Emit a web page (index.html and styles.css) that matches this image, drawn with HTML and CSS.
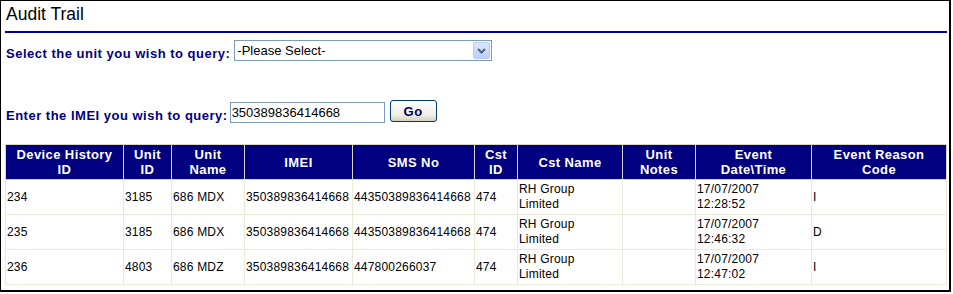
FILE: index.html
```html
<!DOCTYPE html>
<html lang="en">
<head>
  <meta charset="UTF-8" />
  <title>Audit Trail</title>
  <link rel="stylesheet" href="styles.css">
</head>
<body>
  <div class="frame">
    <h1 class="title">Audit Trail</h1>
    <div class="rule"></div>

    <form class="query-form">
      <div class="query-row unit-row">
        <label for="unit" class="query-label">Select the unit you wish to query:</label>
        <div class="select-box">
          <select id="unit" name="unit">
            <option value="">-Please Select-</option>
          </select>
          <span class="select-arrow">
            <svg width="9" height="6" viewBox="0 0 9 6"><path d="M1 1 L4.5 4.5 L8 1" fill="none" stroke="#4d6185" stroke-width="2"/></svg>
          </span>
        </div>
      </div>

      <div class="query-row imei-row">
        <label for="imei" class="query-label">Enter the IMEI you wish to query:</label>
        <input type="text" id="imei" name="imei" class="imei-input" value="350389836414668" />
        <button type="submit" class="go-button">Go</button>
      </div>
    </form>

    <table class="audit-table">
      <colgroup>
        <col style="width:118px">
        <col style="width:48px">
        <col style="width:73px">
        <col style="width:108px">
        <col style="width:122px">
        <col style="width:43px">
        <col style="width:105px">
        <col style="width:73px">
        <col style="width:116px">
        <col style="width:135px">
      </colgroup>
      <thead>
        <tr>
          <th>Device History<br>ID</th>
          <th>Unit<br>ID</th>
          <th>Unit<br>Name</th>
          <th>IMEI</th>
          <th>SMS No</th>
          <th>Cst<br>ID</th>
          <th>Cst Name</th>
          <th>Unit<br>Notes</th>
          <th>Event<br>Date\Time</th>
          <th>Event Reason<br>Code</th>
        </tr>
      </thead>
      <tbody>
        <tr>
          <td>234</td>
          <td>3185</td>
          <td>686 MDX</td>
          <td>350389836414668</td>
          <td>44350389836414668</td>
          <td>474</td>
          <td>RH Group<br>Limited</td>
          <td></td>
          <td>17/07/2007<br>12:28:52</td>
          <td>I</td>
        </tr>
        <tr>
          <td>235</td>
          <td>3185</td>
          <td>686 MDX</td>
          <td>350389836414668</td>
          <td>44350389836414668</td>
          <td>474</td>
          <td>RH Group<br>Limited</td>
          <td></td>
          <td>17/07/2007<br>12:46:32</td>
          <td>D</td>
        </tr>
        <tr>
          <td>236</td>
          <td>4803</td>
          <td>686 MDZ</td>
          <td>350389836414668</td>
          <td>447800266037</td>
          <td>474</td>
          <td>RH Group<br>Limited</td>
          <td></td>
          <td>17/07/2007<br>12:47:02</td>
          <td>I</td>
        </tr>
      </tbody>
    </table>
  </div>
</body>
</html>
```

FILE: styles.css
```css
body {
  margin: 0;
  font-family: "Liberation Sans", Arial, sans-serif;
  background-color: white;
}

/* Outer panel */
.frame {
  box-sizing: border-box;
  width: 951px;
  height: 292px;
  padding: 3px 2px 0 4px;
  border: 1px solid black;
  border-right-width: 2px;
  border-bottom-width: 2px;
}

.title {
  margin: 0 0 0 1px;
  font-size: 17.5px;
  font-weight: normal;
  line-height: 20px;
  color: black;
}

.rule {
  height: 2px;
  margin-top: 7px;
  background-color: #000099;
}

/* Query rows */
.query-row {
  display: flex;
  align-items: center;
}

.unit-row {
  margin-top: 7px;
  height: 21px;
}

.imei-row {
  margin-top: 40px;
  height: 22px;
}

.query-label {
  margin-left: 1px;
  font-size: 13px;
  font-weight: bold;
  letter-spacing: 0.5px;
  color: #000080;
  position: relative;
  top: 3px;
}

.select-box {
  display: flex;
  box-sizing: border-box;
  width: 258px;
  height: 21px;
  margin-left: 4px;
  border: 1px solid #7f9db9;
  background-color: white;
}

.select-box select {
  flex: 1;
  appearance: none;
  -webkit-appearance: none;
  border: none;
  outline: none;
  background: white;
  padding: 0 0 0 2px;
  font-family: "Liberation Sans", Arial, sans-serif;
  font-size: 13px;
  color: black;
}

.select-arrow {
  display: flex;
  align-items: center;
  justify-content: center;
  box-sizing: border-box;
  width: 17px;
  margin: 1px;
  border: 1px solid #b9c9ef;
  border-radius: 2px;
  background: linear-gradient(#dce6fd, #bccffa);
}

.imei-input {
  box-sizing: border-box;
  width: 155px;
  height: 21px;
  margin-left: 2px;
  padding: 0 1px;
  border: 1px solid #7f9db9;
  font-family: "Liberation Sans", Arial, sans-serif;
  font-size: 13px;
  color: black;
}

.go-button {
  box-sizing: border-box;
  width: 47px;
  height: 22px;
  margin-left: 5px;
  padding: 0;
  border: 1px solid #003c74;
  border-radius: 3px;
  background: linear-gradient(#ffffff, #f0efe8 70%, #d6d0c0);
  font-family: "Liberation Sans", Arial, sans-serif;
  font-size: 13px;
  font-weight: bold;
  letter-spacing: 0.5px;
  color: #000050;
  position: relative;
  top: -1px;
}

/* Results table */
.audit-table {
  width: 941px;
  margin-top: 21px;
  table-layout: fixed;
  border-collapse: collapse;
  border-top: 1px solid #f1efe2;
  border-left: 1px solid #f1efe2;
  border-right: 1px solid #aca899;
  border-bottom: 1px solid #aca899;
}

.audit-table th {
  height: 34px;
  padding: 0 1px;
  background-color: #000080;
  color: white;
  font-size: 13px;
  font-weight: bold;
  letter-spacing: 0.4px;
  line-height: 15px;
  text-align: center;
  border: 1px solid #d8d6cc;
}

.audit-table td {
  height: 34px;
  padding: 0 1px;
  font-size: 12px;
  letter-spacing: 0.2px;
  line-height: 15px;
  color: black;
  white-space: nowrap;
  border: 1px solid #ece9d8;
}
```
